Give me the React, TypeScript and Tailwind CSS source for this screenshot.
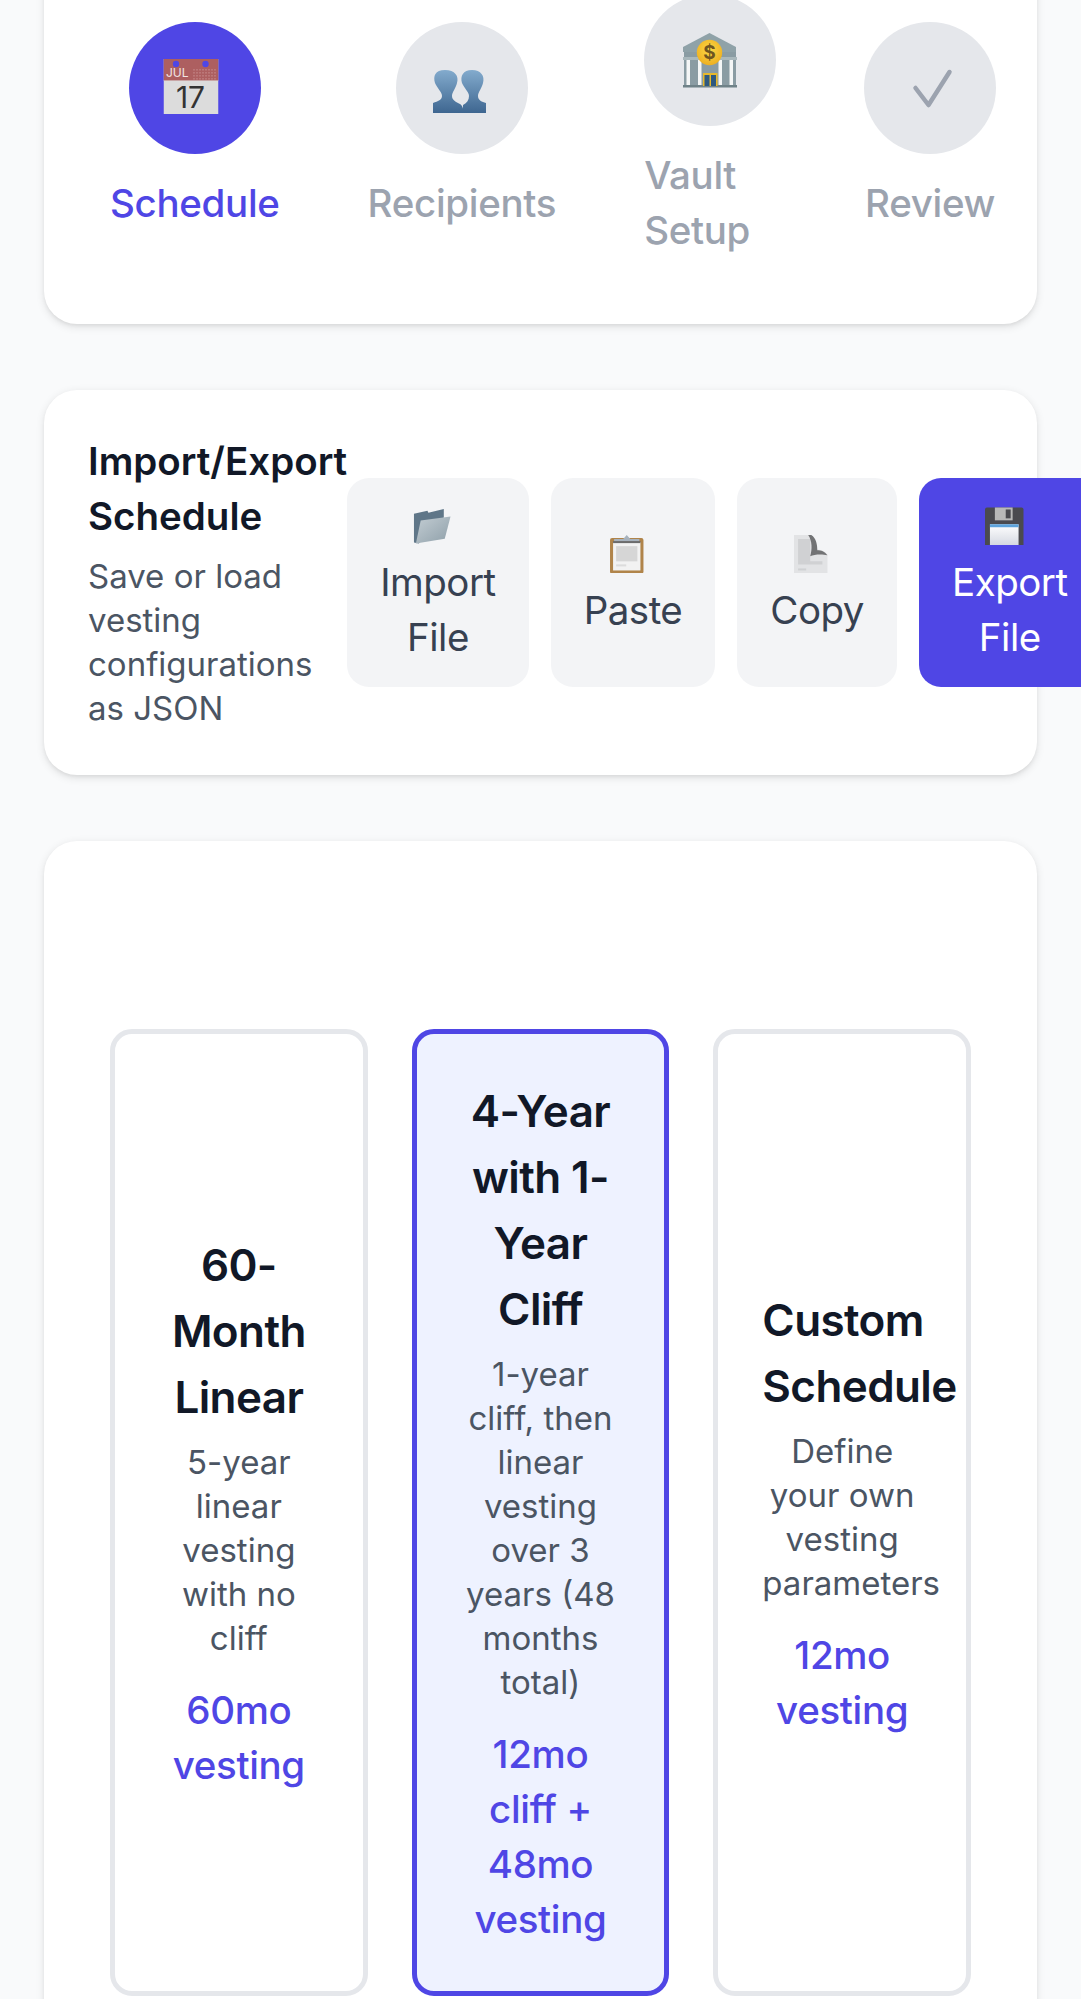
import type { ReactNode } from 'react'

const CalendarIcon = () => (
  <svg viewBox="0 0 55 55" className="w-[55px] h-[55px] -translate-x-[3.5px] -translate-y-px">
    <rect x="0" y="0" width="55" height="55" fill="#dcdcdc" />
    <rect x="0" y="0" width="55" height="21" fill="#ad5f60" />
    <rect x="0" y="21" width="55" height="1" fill="#c9a6a6" />
    <circle cx="12.5" cy="5" r="3.2" fill="#4f46e5" />
    <circle cx="42" cy="5" r="3.2" fill="#4f46e5" />
    <text x="2.5" y="18" fontSize="12" fill="#f1e4e4" fontFamily="Inter, sans-serif">JUL</text>
    <g fill="#c98f8f">
      {[30, 33, 36, 39, 42, 45, 48, 51].map((x) =>
        [10, 13, 16, 19].map((y) => <rect key={`${x}-${y}`} x={x} y={y} width="1" height="1.6" />),
      )}
    </g>
    <text x="27" y="49" textAnchor="middle" fontSize="30" fill="#333" fontFamily="Inter, sans-serif">17</text>
  </svg>
)

const BustsIcon = () => (
  <svg viewBox="0 0 55 55" className="w-[55px] h-[55px] -translate-x-[2px] -translate-y-px">
    <defs>
      <linearGradient id="bust" x1="0" y1="0" x2="0" y2="1">
        <stop offset="0" stopColor="#83abcd" />
        <stop offset="1" stopColor="#3e6690" />
      </linearGradient>
    </defs>
    <path d="M31 54V46C35 44 37 41 37 37C37 33 32 29 30 24C28 17 31 11 40 11C49 11 53 17 51 24C50 29 46 33 46 37C46 41 50 43 54 44V54Z" fill="url(#bust)" />
    <path d="M1 54V44C6 42 10 41 10 37C10 33 5 29 3 24C1 17 3 11 13 11C23 11 27 17 25 24C24 29 20 33 20 37C20 41 24 43 28 45C31 47 31 50 32 54Z" fill="url(#bust)" />
  </svg>
)

const BankIcon = () => (
  <svg viewBox="0 0 55 55" className="w-[55px] h-[55px]">
    <defs>
      <radialGradient id="coin" cx="0.5" cy="0.4" r="0.6">
        <stop offset="0" stopColor="#fbd948" />
        <stop offset="1" stopColor="#eeb021" />
      </radialGradient>
    </defs>
    <path d="M26.5 0L53 14V19H0V14Z" fill="#8fa2a8" />
    <rect x="1" y="19" width="52" height="34" fill="#8a9ca3" />
    <rect x="0" y="24" width="54" height="3" fill="#a9b8bc" />
    {[3.5, 15, 35.5, 46.5].map((x) => (
      <rect key={x} x={x} y="27" width="3.5" height="25" fill="#f4f6f6" />
    ))}
    <rect x="0" y="52" width="54" height="2.5" fill="#6f8288" />
    <rect x="20" y="40" width="14.5" height="13" fill="#e7b92c" />
    <rect x="21.5" y="42" width="5" height="11" fill="#2f5a80" />
    <rect x="28" y="42" width="5" height="11" fill="#2f5a80" />
    <circle cx="26.5" cy="19.5" r="12.7" fill="url(#coin)" />
    <text x="26.5" y="26" textAnchor="middle" fontSize="19" fontWeight="700" fill="#6f5520" fontFamily="Inter, sans-serif">$</text>
  </svg>
)

const CheckIcon = () => (
  <svg viewBox="0 0 55 55" className="w-[55px] h-[55px]">
    <path d="M12.5 28L25.5 45L46.5 12" fill="none" stroke="#9ca3af" strokeWidth="4.5" strokeLinecap="round" strokeLinejoin="round" />
  </svg>
)

const emojiClass = 'inline-block w-[38.5px] h-[38.5px] mr-[11px] align-[-4.5px]'

const FolderIcon = () => (
  <svg viewBox="0 0 40 38" className={emojiClass}>
    <defs>
      <linearGradient id="folder" x1="0" y1="0" x2="1" y2="1">
        <stop offset="0" stopColor="#c3cdd3" />
        <stop offset="1" stopColor="#8e9fa9" />
      </linearGradient>
    </defs>
    <path d="M1 6L15 3L16 5L32 1V10L6 37L1 36Z" fill="#5f7688" />
    <path d="M8 13L39 9L33 32L3 37Z" fill="url(#folder)" />
  </svg>
)

const ClipboardIcon = () => (
  <svg viewBox="0 0 38 38" className={emojiClass}>
    <rect x="2" y="3" width="33" height="35" rx="2" fill="#b0844a" />
    <rect x="5" y="7" width="27" height="28" fill="#f2f2f2" />
    <path d="M8 11H29V26H8Z" fill="#d6d6d6" />
    <rect x="8" y="29" width="10" height="2" fill="#dcdcdc" />
    <path d="M6 7V4H15L18.5 0L22 4H31V7Z" fill="#a7b2bd" />
    <rect x="5" y="6" width="27" height="2" fill="#6b6b6b" />
  </svg>
)

const DocumentIcon = () => (
  <svg viewBox="0 0 38 38" className={emojiClass}>
    <path d="M2 0H19C24 4 24 12 24 15C27 14 31 15 35 19V38H2Z" fill="#e2e3e5" />
    <path d="M6 4H18V26H30V29H6Z" fill="#d0d1d3" />
    <rect x="6" y="33" width="8" height="2" fill="#d0d1d3" />
    <path d="M16 0H19C24 3 25 10 25 15C29 15 32 16 35 20C30 19 22 19 18 21C20 14 20 6 16 0Z" fill="#727375" />
  </svg>
)

const FloppyIcon = () => (
  <svg viewBox="0 0 39 38" className={emojiClass}>
    <defs>
      <linearGradient id="label" x1="0" y1="0" x2="0" y2="1">
        <stop offset="0" stopColor="#ffffff" />
        <stop offset="1" stopColor="#d5d9e2" />
      </linearGradient>
    </defs>
    <path d="M2 0H37Q39 0 39 2V38H0V2Q0 0 2 0Z" fill="#4a4a4f" />
    <rect x="10" y="0" width="18" height="13" fill="#b8b8b8" />
    <rect x="21" y="2" width="5" height="9" fill="#4a4a4f" />
    <rect x="5" y="17" width="29" height="21" fill="url(#label)" />
    <rect x="5" y="17" width="29" height="3" fill="#5da3dc" />
  </svg>
)

const steps: { label: string; icon: ReactNode; active?: boolean }[] = [
  { label: 'Schedule', icon: <CalendarIcon />, active: true },
  { label: 'Recipients', icon: <BustsIcon /> },
  { label: 'Vault Setup', icon: <BankIcon /> },
  { label: 'Review', icon: <CheckIcon /> },
]

const actions: { label: string; icon: ReactNode; primary?: boolean }[] = [
  { label: 'Import File', icon: <FolderIcon /> },
  { label: 'Paste', icon: <ClipboardIcon /> },
  { label: 'Copy', icon: <DocumentIcon /> },
  { label: 'Export File', icon: <FloppyIcon />, primary: true },
]

const templates = [
  { title: '60-Month Linear', desc: '5-year linear vesting with no cliff', meta: '60mo vesting' },
  {
    title: '4-Year with 1-Year Cliff',
    desc: '1-year cliff, then linear vesting over 3 years (48 months total)',
    meta: '12mo cliff + 48mo vesting',
    selected: true,
  },
  { title: 'Custom Schedule', desc: 'Define your own vesting parameters', meta: '12mo vesting' },
]

const cardClass = 'bg-white rounded-[33px] shadow-[0_2.75px_8.25px_0_rgba(0,0,0,0.1),0_2.75px_5.5px_-2.75px_rgba(0,0,0,0.1)]'

export default function App() {
  return (
    <div className="h-screen overflow-hidden bg-[#f9fafb] font-[Inter,sans-serif]">
      <div className="-mt-[71.75px] px-[44px] flex flex-col gap-[66px]">
        {/* Stepper */}
        <section className={`${cardClass} p-[66px]`}>
          <div className="flex items-center gap-[88px]">
            {steps.map((s) => (
              <div key={s.label} className="flex flex-col items-center gap-[22px]">
                <div
                  className={`w-[132px] h-[132px] rounded-full flex items-center justify-center ${
                    s.active ? 'bg-[#4f46e5]' : 'bg-[#e5e7eb]'
                  }`}
                >
                  {s.icon}
                </div>
                <span
                  className={`text-[38.5px] leading-[55px] font-medium tracking-[-0.32px] ${
                    s.active ? 'text-[#4f46e5]' : 'text-[#9ca3af]'
                  }`}
                >
                  {s.label}
                </span>
              </div>
            ))}
          </div>
        </section>

        {/* Import / export */}
        <section className={`${cardClass} p-[44px] flex items-center justify-between`}>
          <div>
            <h3 className="text-[38.5px] leading-[55px] font-semibold text-[#111827]">Import/Export Schedule</h3>
            <p className="mt-[10px] mb-px text-[33px] leading-[44px] text-[#4b5563]">Save or load vesting configurations as JSON</p>
          </div>
          <div className="flex gap-[22px]">
            {actions.map((a) => (
              <button
                key={a.label}
                className={`px-[33px] py-[22px] rounded-[22px] text-[38.5px] leading-[55px] font-normal tracking-[-0.5px] text-center ${
                  a.primary ? 'bg-[#4f46e5] text-white' : 'bg-[#f3f4f6] text-[#374151]'
                }`}
              >
                {a.icon}
                {a.label}
              </button>
            ))}
          </div>
        </section>

        {/* Templates */}
        <section className={`${cardClass} p-[66px]`}>
          <div className="h-[121.5px]" />
          <div className="grid grid-cols-3 gap-[44px]">
            {templates.map((t) => (
              <div
                key={t.title}
                className={`border-[5.5px] rounded-[22px] p-[44px] flex flex-col justify-center text-center ${
                  t.selected ? 'border-[#4f46e5] bg-[#eef2ff]' : 'border-[#e5e7eb] bg-white'
                }`}
              >
                <h4 className="text-[44px] leading-[66px] font-semibold tracking-[-0.6px] text-[#111827]">{t.title}</h4>
                <p className="mt-[10px] text-[33px] leading-[44px] text-[#4b5563]">{t.desc}</p>
                <p className="mt-[23px] text-[38.5px] leading-[55px] font-medium tracking-[-0.35px] text-[#4f46e5]">{t.meta}</p>
              </div>
            ))}
          </div>
        </section>
      </div>
    </div>
  )
}
